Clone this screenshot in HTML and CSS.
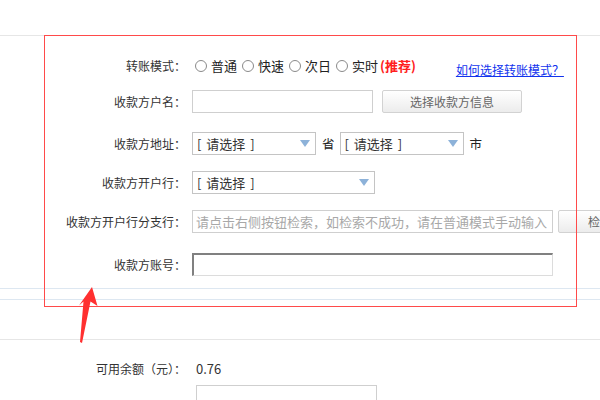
FILE: index.html
```html
<!DOCTYPE html>
<html>
<head>
<meta charset="utf-8">
<link rel="stylesheet" href="styles.css">
</head>
<body>
<div class="top"></div>
<div class="form">
  <div class="row r1">
    <div class="label">转账模式：</div>
    <div class="field radios">
      <span class="radio"></span><span class="rtext">普通</span>
      <span class="radio"></span><span class="rtext">快速</span>
      <span class="radio"></span><span class="rtext">次日</span>
      <span class="radio"></span><span class="rtext">实时</span><span class="rec">(推荐)</span>
      <a class="help" href="#">如何选择转账模式？</a>
    </div>
  </div>
  <div class="row r2">
    <div class="label">收款方户名：</div>
    <div class="field">
      <input class="inp w181" type="text">
      <button class="btn btn-select">选择收款方信息</button>
    </div>
  </div>
  <div class="row r3">
    <div class="label">收款方地址：</div>
    <div class="field">
      <div class="sel w124"><span>[ 请选择 ]</span><i class="tri"></i></div>
      <span class="unit">省</span>
      <div class="sel w124"><span>[ 请选择 ]</span><i class="tri"></i></div>
      <span class="unit">市</span>
    </div>
  </div>
  <div class="row r4">
    <div class="label">收款方开户行：</div>
    <div class="field">
      <div class="sel w183"><span>[ 请选择 ]</span><i class="tri"></i></div>
    </div>
  </div>
  <div class="row r5">
    <div class="label">收款方开户行分支行：</div>
    <div class="field">
      <input class="inp w361" type="text" placeholder="请点击右侧按钮检索，如检索不成功，请在普通模式手动输入">
      <button class="btn btn-search">检索</button>
    </div>
  </div>
  <div class="row r6">
    <div class="label">收款方账号：</div>
    <div class="field">
      <input class="inp acct w361" type="text">
    </div>
  </div>
</div>
<div class="line-blue l1"></div>
<div class="line-blue l2"></div>
<div class="line-gray"></div>
<div class="balance">
  <div class="label">可用余额（元）：</div>
  <div class="bval">0.76</div>
</div>
<div class="bottom-box"></div>

<div class="redbox"></div>
<svg class="arrow" width="30" height="70" viewBox="70 280 30 70">
  <polygon points="92,287 97.5,306 90.5,301.5 82,343 80,342 83.5,301.5 79,305.5" fill="#ff3030"/>
</svg>
</body>
</html>
```
FILE: styles.css
```css
* { box-sizing: border-box; }
html, body { margin: 0; padding: 0; background: #fff; }
body {
  font-family: "Noto Sans CJK SC", "Noto Sans", sans-serif;
  font-size: 12px;
  color: #333;
  width: 600px;
  height: 400px;
  overflow: hidden;
  position: relative;
}
.top { height: 36px; border-bottom: 1px solid #e6e6e6; }
.form { display: flex; flex-direction: column; }
.row { display: flex; align-items: center; height: 23px; width: 800px; }
.r1 { margin-top: 18px; }
.r2 { margin-top: 13px; }
.r3 { margin-top: 19px; }
.r4 { margin-top: 16px; }
.r5 { margin-top: 16px; }
.r6 { margin-top: 20px; }
.label {
  width: 186px;
  flex-shrink: 0;
  text-align: right;
  color: #333;
  white-space: nowrap;
  font-size: 12px;
}
.field {
  margin-left: 6px;
  display: flex;
  align-items: center;
  white-space: nowrap;
  flex-shrink: 0;
}
.field > * { flex-shrink: 0; }
.radios { font-size: 13px; color: #222; }
.radio {
  width: 12px; height: 12px;
  border: 1px solid #8a8a8a;
  border-radius: 50%;
  background: #fff;
  margin: 0 4px 0 3px;
  display: inline-block;
}
.rtext { margin-right: 2px; }
.rec { color: #ff2020; font-weight: bold; font-size: 13px; }
.help {
  margin-left: 40px;
  color: #1133ee;
  text-decoration: underline;
  font-size: 12px;
  position: relative;
  top: 4px;
}
.inp {
  height: 23px;
  border: 1px solid #cfcfcf;
  background: #fff;
  font-family: inherit;
  font-size: 13px;
  padding: 0 3px;
  margin: 0;
  outline: none;
}
.inp::placeholder { color: #a8a8a8; }
.w181 { width: 181px; }
.w361 { width: 361px; }
.acct {
  border-top: 2px solid #808080;
  border-left: 2px solid #808080;
  border-right: 1px solid #dcdcdc;
  border-bottom: 1px solid #dcdcdc;
}
.btn {
  height: 23px;
  border: 1px solid #d2d2d2;
  border-radius: 2px;
  background: linear-gradient(#ffffff, #ececec);
  color: #666;
  font-family: inherit;
  font-size: 12px;
  padding: 0;
  margin: 0;
}
.btn-select { width: 140px; margin-left: 9px; }
.btn-search { width: 70px; margin-left: 5px; text-align: left; padding-left: 29px; }
.sel {
  height: 23px;
  border: 1px solid #c4c4c4;
  background: #fff;
  display: flex;
  align-items: center;
  justify-content: space-between;
  padding: 0 4px 0 4px;
  font-size: 13px;
  color: #333;
}
.sel span { word-spacing: 2px; }
.w124 { width: 124px; }
.w183 { width: 183px; }
.tri {
  width: 0; height: 0;
  border-left: 5px solid transparent;
  border-right: 5px solid transparent;
  border-top: 7px solid #8db2d9;
  margin-right: 1px;
}
.unit { margin: 0 5px 0 6px; color: #222; font-size: 12.5px; }
.line-blue { height: 0; border-top: 1px solid #dde7f1; }
.l1 { margin-top: 12px; }
.l2 { margin-top: 10px; }
.line-gray { margin-top: 39px; border-top: 1px solid #e6e6e6; }
.balance { display: flex; align-items: center; height: 20px; margin-top: 18px; }
.bval { margin-left: 10px; font-size: 13px; color: #333; }
.bottom-box {
  margin-left: 196px;
  margin-top: 7px;
  width: 181px;
  height: 23px;
  border: 1px solid #cfcfcf;
}
.redbox {
  position: absolute;
  left: 44px; top: 35px;
  width: 533px; height: 272px;
  border: 1px solid #ff4a4a;
  pointer-events: none;
}
.arrow { position: absolute; left: 70px; top: 280px; }
```
